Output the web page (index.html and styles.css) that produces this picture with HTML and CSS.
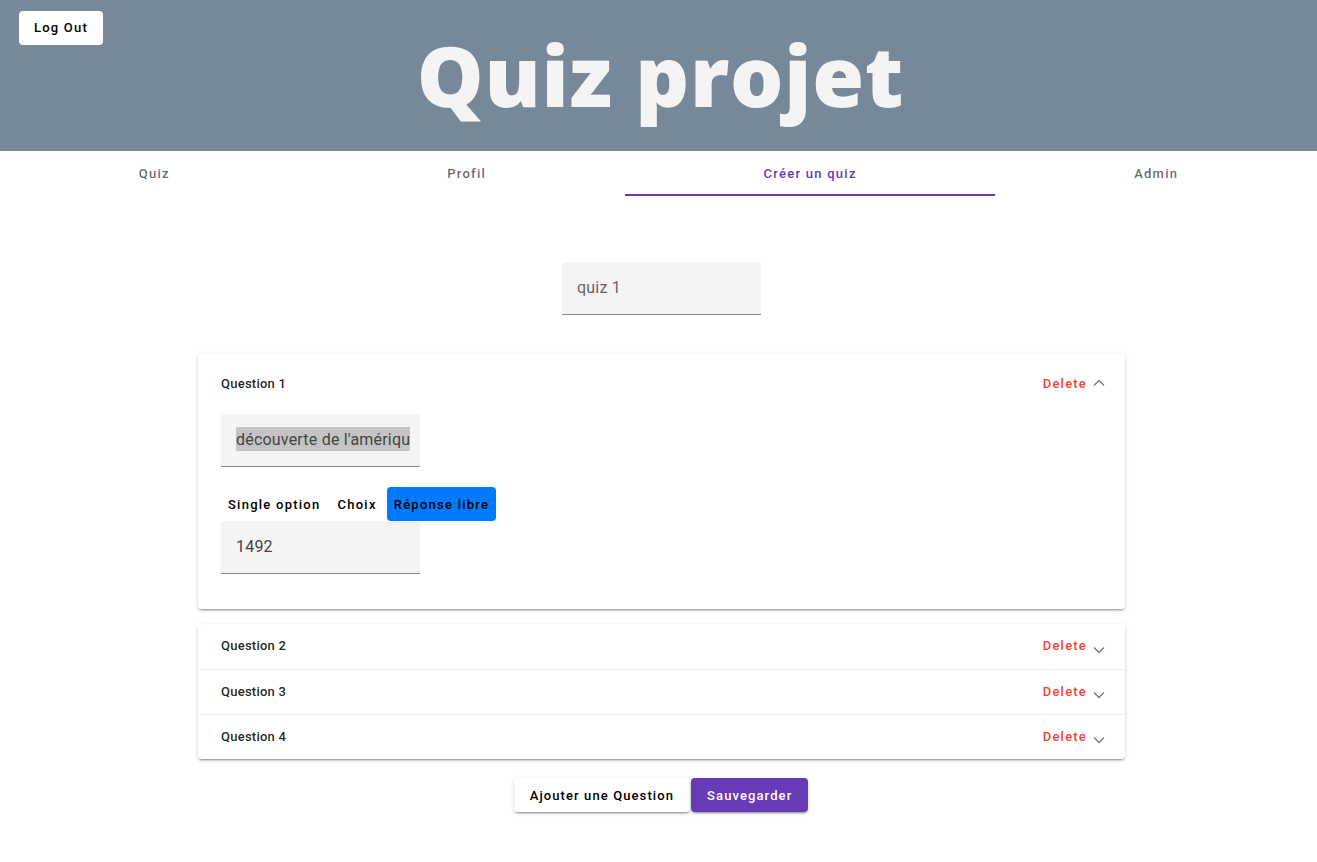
FILE: index.html
```html
<!DOCTYPE html>
<html lang="fr">
<head>
<meta charset="utf-8">
<title>Quiz projet</title>
<link rel="stylesheet" href="styles.css">
</head>
<body>
<header class="hero">
  <button class="btn btn-white logout">Log Out</button>
  <h1 class="hero-title">Quiz projet</h1>
</header>
<nav class="tabs">
  <a class="tab">Quiz</a>
  <a class="tab">Profil</a>
  <a class="tab tab-active">Créer un quiz</a>
  <a class="tab">Admin</a>
</nav>
<main class="main">
  <div class="field field-name"><span class="field-text">quiz 1</span></div>

  <section class="card card-open">
    <div class="panel-head head-open">
      <span class="panel-title">Question 1</span>
      <span class="panel-actions">
        <span class="delete">Delete</span>
        <svg class="chev" width="12" height="8" viewBox="0 0 12 8"><path d="M1 6.5 L6 1.5 L11 6.5" fill="none" stroke="#777" stroke-width="1.3"/></svg>
      </span>
    </div>
    <div class="panel-body">
      <div class="field"><span class="field-text"><span class="sel">découverte de l'amériqu</span></span></div>
      <div class="types">
        <button class="type">Single option</button>
        <button class="type">Choix</button>
        <button class="type type-on">Réponse libre</button>
      </div>
      <div class="field"><span class="field-text dark">1492</span></div>
    </div>
  </section>

  <section class="card card-list">
    <div class="panel-head row">
      <span class="panel-title">Question 2</span>
      <span class="panel-actions">
        <span class="delete">Delete</span>
        <svg class="chev down" width="12" height="8" viewBox="0 0 12 8"><path d="M1 1.5 L6 6.5 L11 1.5" fill="none" stroke="#777" stroke-width="1.3"/></svg>
      </span>
    </div>
    <div class="panel-head row">
      <span class="panel-title">Question 3</span>
      <span class="panel-actions">
        <span class="delete">Delete</span>
        <svg class="chev down" width="12" height="8" viewBox="0 0 12 8"><path d="M1 1.5 L6 6.5 L11 1.5" fill="none" stroke="#777" stroke-width="1.3"/></svg>
      </span>
    </div>
    <div class="panel-head row">
      <span class="panel-title">Question 4</span>
      <span class="panel-actions">
        <span class="delete">Delete</span>
        <svg class="chev down" width="12" height="8" viewBox="0 0 12 8"><path d="M1 1.5 L6 6.5 L11 1.5" fill="none" stroke="#777" stroke-width="1.3"/></svg>
      </span>
    </div>
  </section>

  <div class="actions">
    <button class="btn btn-white raised act">Ajouter une Question</button>
    <button class="btn btn-purple raised act">Sauvegarder</button>
  </div>
</main>
</body>
</html>
```

FILE: styles.css
```css
* { box-sizing: border-box; }
html, body { margin: 0; padding: 0; }
body {
  font-family: Roboto, "Liberation Sans", sans-serif;
  background: #fff;
  color: rgba(0,0,0,0.87);
  width: 1317px;
  min-height: 862px;
}

.hero {
  position: relative;
  height: 151px;
  background: #778899;
  display: flex;
  align-items: center;
  justify-content: center;
}
.hero-title {
  margin: 0;
  padding-left: 4px;
  font-family: "Open Sans", Lato, sans-serif;
  font-weight: 800;
  font-size: 84px;
  line-height: 1;
  color: #f4f4f4;
  letter-spacing: 0.7px;
  margin-top: -1px;
}

.btn {
  font-family: Roboto, "Liberation Sans", sans-serif;
  font-size: 13px;
  font-weight: 500;
  letter-spacing: 1.2px;
  height: 34px;
  padding: 0 15px;
  border: none;
  border-radius: 4px;
  cursor: pointer;
  white-space: nowrap;
}
.btn-white { background: #fff; color: #000; }
.btn-purple { background: #673ab7; color: #fff; }
.raised {
  box-shadow: 0 3px 1px -2px rgba(0,0,0,.2), 0 2px 2px 0 rgba(0,0,0,.14), 0 1px 5px 0 rgba(0,0,0,.12);
}
.logout {
  position: absolute;
  left: 19px;
  top: 11px;
  width: 84px;
  padding: 0 0 2px;
}

.tabs {
  display: flex;
  height: 45px;
}
.tab {
  flex: 1 1 auto;
  padding: 0 24px;
  display: flex;
  align-items: center;
  justify-content: center;
  font-size: 13px;
  font-weight: 500;
  letter-spacing: 1.25px;
  color: rgba(0,0,0,0.6);
  border-bottom: 2px solid transparent;
  padding-top: 1px;
}
.tab-active {
  color: #673ab7;
  border-bottom-color: #673ab7;
}

.main {
  display: flex;
  flex-direction: column;
  align-items: center;
  padding: 66px 0 40px 6px;
}

.field {
  width: 199px;
  height: 53px;
  background: #f4f4f4;
  border-radius: 4px 4px 0 0;
  border-bottom: 1px solid #8a8a8a;
  display: flex;
  align-items: center;
  padding: 0 15px 1px;
  overflow: hidden;
  white-space: nowrap;
}
.field-text {
  font-size: 16px;
  color: #666;
  letter-spacing: 0.2px;
}
.field-text.dark { color: #444; }
.sel {
  background: #c4c4c4;
  color: #444;
  padding: 3px 0 2px;
}

.field-name { margin-bottom: 39px; }

.card {
  width: 927px;
  background: #fff;
  border-radius: 4px;
  box-shadow: 0 3px 1px -2px rgba(0,0,0,.2), 0 2px 2px 0 rgba(0,0,0,.14), 0 1px 5px 0 rgba(0,0,0,.12);
}
.card-open { margin-bottom: 15px; }

.panel-head {
  display: flex;
  align-items: center;
  justify-content: space-between;
  padding: 0 20px 0 23px;
}
.head-open { height: 60px; padding-bottom: 2px; }
.row { height: 45px; padding-bottom: 2px; }
.row + .row { border-top: 1px solid #eeeeee; }
.panel-title {
  font-size: 13px;
  font-weight: 500;
  letter-spacing: 0.25px;
  color: rgba(0,0,0,0.87);
}
.panel-actions {
  display: flex;
  align-items: center;
  gap: 6px;
}
.delete {
  font-size: 13px;
  font-weight: 500;
  letter-spacing: 1.2px;
  color: #f44336;
}
.chev { display: block; }
.chev.down { margin-top: 8px; }

.panel-body {
  padding: 0 23px 35px;
}
.types {
  display: flex;
  align-items: center;
  gap: 3px;
  margin-top: 20px;
}
.type {
  height: 34px;
  padding: 0 7px;
  border: none;
  background: transparent;
  border-radius: 4px;
  font-family: Roboto, "Liberation Sans", sans-serif;
  font-size: 13px;
  font-weight: 500;
  letter-spacing: 1.25px;
  color: #000;
}
.type-on { background: #007bff; }

.actions {
  display: flex;
  gap: 1px;
  margin-top: 19px;
  padding-right: 1px;
}
.act {
  letter-spacing: 1.1px;
  padding: 0 16px;
}
```
